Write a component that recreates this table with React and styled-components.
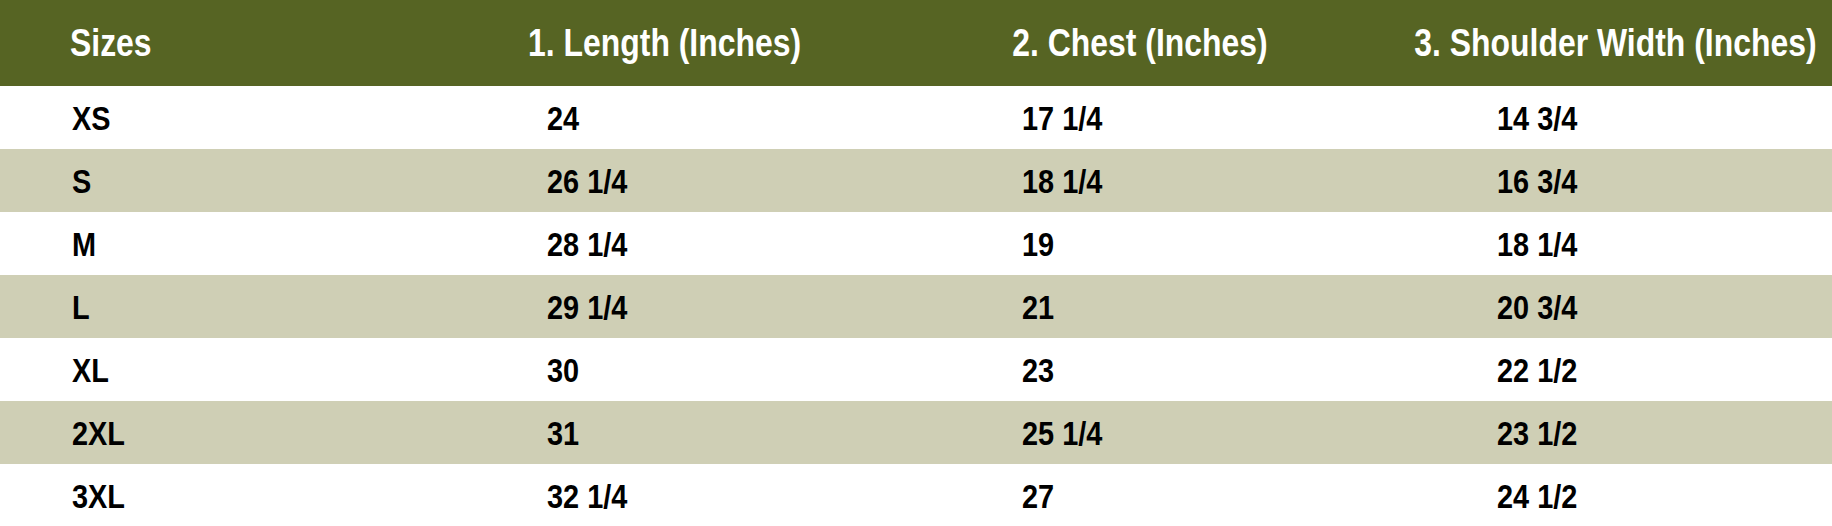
import React from 'react';
import styled, { createGlobalStyle } from 'styled-components';

const GlobalStyle = createGlobalStyle`
  html, body {
    margin: 0;
    padding: 0;
    background: #ffffff;
  }
  body {
    font-family: "Liberation Sans", Arial, sans-serif;
  }
`;

const COL = 475;

const rows = [
  ['XS', '24', '17 1/4', '14 3/4'],
  ['S', '26 1/4', '18 1/4', '16 3/4'],
  ['M', '28 1/4', '19', '18 1/4'],
  ['L', '29 1/4', '21', '20 3/4'],
  ['XL', '30', '23', '22 1/2'],
  ['2XL', '31', '25 1/4', '23 1/2'],
  ['3XL', '32 1/4', '27', '24 1/2'],
];

const headers = ['Sizes', '1. Length (Inches)', '2. Chest (Inches)', '3. Shoulder Width (Inches)'];

const Table = styled.div`
  width: 1832px;
  overflow: hidden;
`;

const Row = styled.div`
  display: grid;
  grid-template-columns: repeat(4, ${COL}px);
  align-items: center;
  height: ${p => (p.$head ? 86 : 63)}px;
  background: ${p => (p.$head ? '#566423' : p.$shaded ? '#cfcfb5' : '#ffffff')};
`;

const HeadCell = styled.div`
  display: flex;
  justify-content: ${p => (p.$first ? 'flex-start' : 'center')};
  padding-left: ${p => (p.$first ? 70 : 0)}px;
  padding-right: ${p => (p.$first ? 0 : 95)}px;
  color: #ffffff;
  font-weight: 700;
  font-size: 38px;
  line-height: 1;
`;

const Cell = styled.div`
  display: flex;
  padding-left: 72px;
  color: #000000;
  font-weight: 700;
  font-size: 34px;
  line-height: 1;
`;

/* narrow face: the reference uses a condensed grotesque */
const Narrow = styled.span`
  display: inline-block;
  flex-shrink: 0;
  white-space: nowrap;
  transform: scaleX(${p => p.$scale || 0.84});
  transform-origin: ${p => (p.$center ? 'center' : 'left')} center;
`;

export default function App() {
  return (
    <>
      <GlobalStyle />
      <Table>
        <Row $head>
          {headers.map((h, i) => (
            <HeadCell key={h} $first={i === 0}>
              <Narrow $center={i !== 0}>{h}</Narrow>
            </HeadCell>
          ))}
        </Row>
        {rows.map((r, i) => (
          <Row key={r[0]} $shaded={i % 2 === 1}>
            {r.map((v, j) => (
              <Cell key={j}>
                <Narrow $scale={0.85}>{v}</Narrow>
              </Cell>
            ))}
          </Row>
        ))}
      </Table>
    </>
  );
}
